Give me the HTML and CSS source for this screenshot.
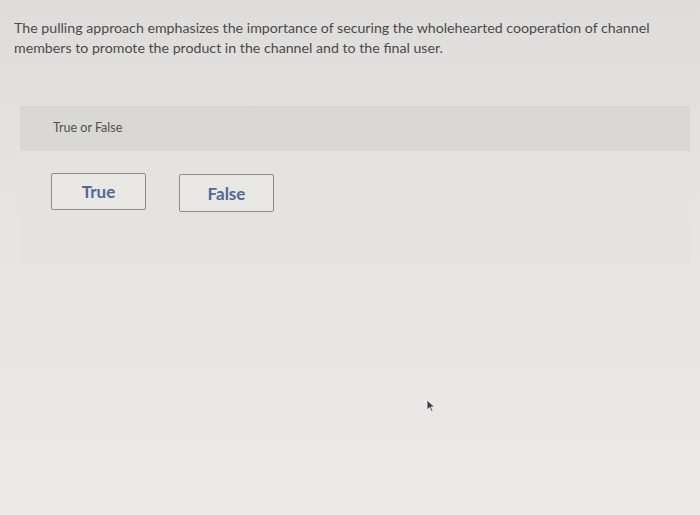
FILE: index.html
```html
<!DOCTYPE html>
<html lang="en">
<head>
  <meta charset="UTF-8">
  <title>True or False</title>
  <link rel="stylesheet" href="styles.css">
</head>
<body>
  <p class="question">The pulling approach emphasizes the importance of securing the wholehearted cooperation of channel members to promote the product in the channel and to the final user.</p>

  <div class="answer-panel">
    <div class="panel-head">True or False</div>
    <div class="choices">
      <button class="choice">True</button>
      <button class="choice choice-low">False</button>
    </div>
  </div>

  <!-- mouse pointer -->
  <svg class="pointer" width="10" height="13" viewBox="0 0 10 13">
    <path d="M1 1 L1 11 L3.5 8.5 L5.5 12.5 L7 11.8 L5 8 L8.5 8 Z" fill="#3c3f44" stroke="#f4f4f2" stroke-width="0.8"/>
  </svg>
</body>
</html>
```

FILE: styles.css
```css
html, body {
  margin: 0;
  padding: 0;
}

body {
  font-family: Lato, "Open Sans", Arial, sans-serif;
  background: linear-gradient(to bottom, #dfdddb 0%, #e6e5e2 45%, #eceae7 100%);
  width: 700px;
  height: 515px;
  position: relative;
  overflow: hidden;
  padding: 18px 10px 0 14px;
  box-sizing: border-box;
}

.question {
  margin: 0;
  max-width: 660px;
  font-size: 14.2px;
  line-height: 20px;
  color: #4a4a4a;
}

.answer-panel {
  margin: 48px 0 0 6px;
  background-color: #e4e3e0;
  height: 157px;
}

.panel-head {
  background-color: #d9d8d5;
  height: 45px;
  padding: 14px 0 0 33px;
  box-sizing: border-box;
  font-size: 12.5px;
  color: #505050;
}

.choices {
  display: flex;
  gap: 33px;
  padding: 22px 0 0 31px;
}

.choice {
  width: 95px;
  height: 37px;
  border: 1px solid #8c8c8c;
  border-radius: 2px;
  background-color: #e9e8e5;
  font-family: Lato, "Open Sans", Arial, sans-serif;
  font-size: 17px;
  font-weight: bold;
  color: #4d6b96;
  padding: 0;
}

.choice-low {
  margin-top: 1px;
  height: 38px;
}

.pointer {
  position: absolute;
  left: 426px;
  top: 399px;
}
```
